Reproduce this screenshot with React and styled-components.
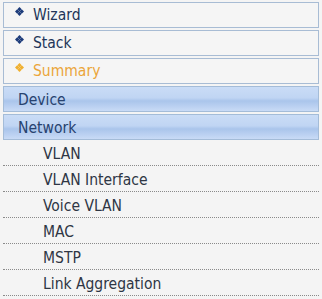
import React from 'react'
import styled, { createGlobalStyle } from 'styled-components'

const GlobalStyle = createGlobalStyle`
    body {
        margin: 0;
        background: #f4f4f4;
        font-family: "DejaVu Sans Condensed", "DejaVu Sans", Verdana, sans-serif;
        font-stretch: condensed;
    }
`

const topLinks = [
    { title: 'Wizard' },
    { title: 'Stack' },
    { title: 'Summary', active: true },
]

const sections = ['Device', 'Network']

const subItems = ['VLAN', 'VLAN Interface', 'Voice VLAN', 'MAC', 'MSTP', 'Link Aggregation']

function Diamond({ color }) {
    return (
        <Bullet width="9" height="9" viewBox="0 0 9 9">
            <path d="M4.5 0 L6.7 2.2 L4.5 4.4 L2.3 2.2 Z" fill={color} />
            <path d="M2.2 2.3 L4.4 4.5 L2.2 6.7 L0 4.5 Z" fill={color} />
            <path d="M6.8 2.3 L9 4.5 L6.8 6.7 L4.6 4.5 Z" fill={color} />
            <path d="M4.5 4.6 L6.7 6.8 L4.5 9 L2.3 6.8 Z" fill={color} />
        </Bullet>
    )
}

function App() {
    return (
        <>
            <GlobalStyle />
            <Menu>
                {topLinks.map((item) => (
                    <LinkBox key={item.title} active={item.active}>
                        <Diamond color={item.active ? '#f0b030' : '#1c3b7a'} />
                        {item.title}
                    </LinkBox>
                ))}
                {sections.map((s) => (
                    <Section key={s}>{s}</Section>
                ))}
                <SubList>
                    {subItems.map((s) => (
                        <SubItem key={s}>{s}</SubItem>
                    ))}
                </SubList>
            </Menu>
        </>
    )
}

const Menu = styled.div`
    width: 316px;
    padding: 2px 0 0 3px;
    display: flex;
    flex-direction: column;
    gap: 2px;
`
const LinkBox = styled.div`
    position: relative;
    height: 24px;
    border: 1px solid #a8bcd4;
    background: #f5f5f5;
    padding-left: 29px;
    font-size: 15.5px;
    line-height: 24px;
    color: ${(p) => (p.active ? '#eba53a' : '#223559')};
`
const Bullet = styled.svg`
    position: absolute;
    left: 11px;
    top: 4px;
`
const Section = styled.div`
    height: 24px;
    border: 1px solid #a4bcd8;
    background: linear-gradient(#cadcf6 0%, #c0d5f3 45%, #aac5eb 58%, #bad0f1 80%, #c9dbf6 100%);
    padding-left: 14px;
    font-size: 15.5px;
    line-height: 26px;
    color: #27426f;
`
const SubList = styled.ul`
    list-style: none;
    margin: -2px 0 0;
    padding: 0;
`
const SubItem = styled.li`
    height: 23px;
    padding-top: 2px;
    border-bottom: 1px dotted #8a8a8a;
    padding-left: 40px;
    font-size: 15.5px;
    line-height: 25px;
    color: #2e3644;
`

export default App
